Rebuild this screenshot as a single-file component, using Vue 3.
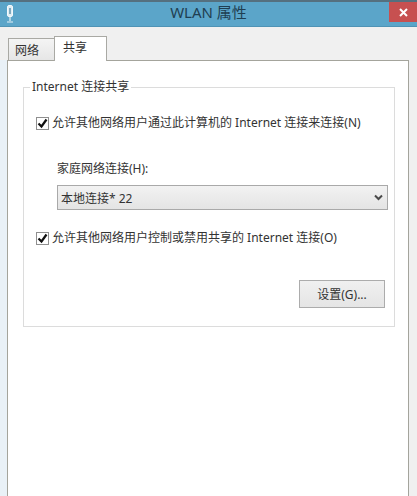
<template>
  <div class="window">
    <div class="titlebar">
      <svg class="app-icon" width="12" height="20" viewBox="0 0 12 20">
        <rect x="3.5" y="1.5" width="5" height="11" rx="1.5" fill="#dfeef5" stroke="#f4f9fb" />
        <rect x="5" y="4" width="2" height="6" fill="#7fa9be" />
        <path d="M6 13v4M3 18h6" stroke="#e6f2f7" stroke-width="1.2" fill="none" />
      </svg>
      <span class="title">WLAN 属性</span>
      <button class="close">
        <svg width="9" height="9" viewBox="0 0 9 9">
          <path d="M1 1l7 7M8 1l-7 7" stroke="#fff" stroke-width="2" fill="none" />
        </svg>
      </button>
    </div>

    <div class="body">
      <div class="tabs">
        <div class="tab">网络</div>
        <div class="tab active">共享</div>
      </div>

      <div class="panel">
        <fieldset class="group">
          <legend>Internet 连接共享</legend>

          <div class="check first" @click="allowConnect = !allowConnect">
            <span class="box">
              <svg v-if="allowConnect" width="11" height="11" viewBox="0 0 11 11">
                <path d="M1.5 5.5l3 3 5-7" stroke="#111" stroke-width="2.2" fill="none" />
              </svg>
            </span>
            <span class="check-text">允许其他网络用户通过此计算机的 Internet 连接来连接(N)</span>
          </div>

          <div class="home-label">家庭网络连接(H):</div>
          <div class="select">
            <span>{{ connection }}</span>
            <svg width="9" height="7" viewBox="0 0 9 7">
              <path d="M1 1.5l3.5 3.5 3.5-3.5" stroke="#4a4a4a" stroke-width="2" fill="none" />
            </svg>
          </div>

          <div class="check second" @click="allowControl = !allowControl">
            <span class="box">
              <svg v-if="allowControl" width="11" height="11" viewBox="0 0 11 11">
                <path d="M1.5 5.5l3 3 5-7" stroke="#111" stroke-width="2.2" fill="none" />
              </svg>
            </span>
            <span class="check-text">允许其他网络用户控制或禁用共享的 Internet 连接(O)</span>
          </div>

          <div class="actions">
            <button class="btn">设置(G)...</button>
          </div>
        </fieldset>
      </div>
    </div>
  </div>
</template>

<script setup>
import { ref } from 'vue'

const allowConnect = ref(true)
const allowControl = ref(true)
const connection = ref('本地连接* 22')
</script>

<style>
html, body {
  margin: 0;
  background: #f0f0f0;
}
</style>

<style scoped>
.window {
  width: 417px;
  height: 496px;
  overflow: hidden;
  display: flex;
  flex-direction: column;
  background: #f0f0f0;
  color: #333;
  font-family: "Noto Sans", "Noto Sans CJK SC", sans-serif;
  font-size: 12px;
}

.titlebar {
  height: 24px;
  flex: none;
  display: flex;
  align-items: center;
  justify-content: center;
  position: relative;
  background: #5ba5c9;
  border-top: 2px solid #55707f;
  border-bottom: 1px solid #4f93b5;
}

.app-icon {
  position: absolute;
  left: 4px;
  top: 2px;
}

.title {
  font-size: 15px;
  line-height: 20px;
  padding-bottom: 4px;
  color: #1f3f52;
}

.close {
  position: absolute;
  right: 0;
  top: 0;
  width: 28px;
  height: 20px;
  padding: 0;
  border: 0;
  background: #c75050;
  display: flex;
  align-items: center;
  justify-content: center;
}

.body {
  flex: 1;
  display: flex;
  flex-direction: column;
  padding: 9px 8px 0 7px;
}

.tabs {
  display: flex;
  align-items: flex-end;
  height: 24px;
  flex: none;
  padding-left: 1px;
  position: relative;
  z-index: 1;
}

.tab {
  width: 47px;
  height: 22px;
  box-sizing: border-box;
  border: 1px solid #a9a9a4;
  border-bottom: 0;
  background: linear-gradient(#f4f4f4, #e6e6e6);
  padding-left: 6px;
  line-height: 23px;
}

.tab.active {
  width: 53px;
  height: 25px;
  margin-left: -1px;
  margin-bottom: -1px;
  background: #fff;
  padding-left: 8px;
  line-height: 22px;
}

.panel {
  flex: 1;
  box-sizing: border-box;
  background: #fff;
  border: 1px solid #a4a49c;
  border-bottom: 0;
  padding: 19px 13px 0 15px;
  box-shadow: -7px 0 0 #e9f1f7;
}

.group {
  margin: 0;
  height: 247px;
  box-sizing: border-box;
  border: 1px solid #dcdcdc;
  padding: 0 7px 0 12px;
  min-width: 0;
}

legend {
  padding: 0 2px;
  margin-left: -6px;
  line-height: 14px;
}

.check {
  display: flex;
  align-items: center;
  gap: 3px;
  height: 16px;
  white-space: nowrap;
}

.check-text {
  padding-bottom: 2px;
}

.box {
  width: 13px;
  height: 13px;
  box-sizing: border-box;
  flex: none;
  border: 1px solid #8f8f8f;
  background: #fff;
  display: flex;
  align-items: center;
  justify-content: center;
}

.check.first {
  margin-top: 21px;
}

.home-label {
  margin: 30px 0 0 21px;
  height: 16px;
  line-height: 16px;
}

.select {
  margin: 8px 0 0 21px;
  height: 25px;
  box-sizing: border-box;
  width: 331px;
  display: flex;
  align-items: center;
  justify-content: space-between;
  padding: 0 4px 0 3px;
  border: 1px solid #a9a9a9;
  background: linear-gradient(#f2f2f2, #e4e4e4);
}

.check.second {
  margin-top: 20px;
}

.actions {
  display: flex;
  justify-content: flex-end;
  margin-top: 34px;
  padding-right: 2px;
}

.btn {
  width: 86px;
  height: 28px;
  padding: 0;
  border: 1px solid #acacac;
  background: linear-gradient(#f0f0f0, #e5e5e5);
  font: inherit;
  color: #333;
}
</style>
